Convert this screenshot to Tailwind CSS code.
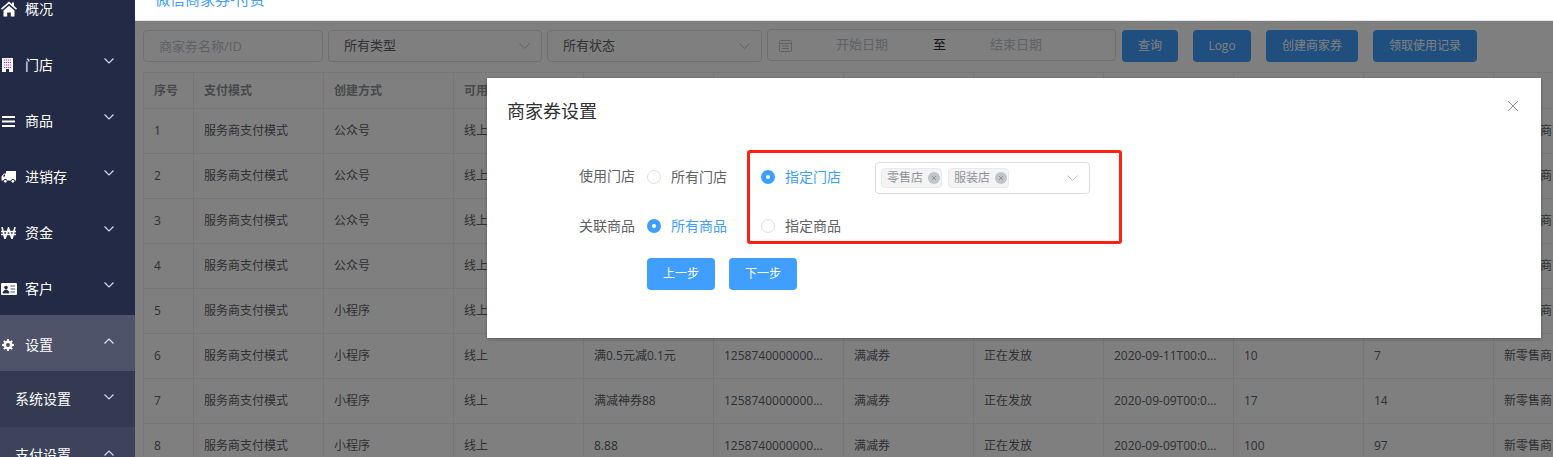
<!DOCTYPE html>
<html lang="zh-CN">
<head>
  <meta charset="UTF-8">
  <title>商家券设置</title>
  <script src="https://cdn.jsdelivr.net/npm/@tailwindcss/browser@4"></script>
</head>
<body class="h-[457px] overflow-hidden bg-white font-['Open_Sans','Noto_Sans_CJK_SC',sans-serif]">
  <div class="flex h-[457px]">
    <!-- 侧边栏 -->
    <aside class="w-[135px] shrink-0 overflow-hidden bg-[#222a45] text-sm text-white">
      <div class="-mt-[21px] flex h-14 items-center pt-1 pr-[21px] pl-[1px]">
        <svg class="mr-[8px] h-[16px] w-[16px]" viewBox="0 0 16 15" fill="#fff"><path d="M8 0 0 7l1 1.200L8 2.200l7 6L16 7l-3-2.600V1h-2v1.700zM2.500 9 8 4.200 13.500 9v6H9.800v-4H6.200v4H2.500z"/></svg>
        <span>概况</span>
      </div>
      <div class="flex h-14 items-center pt-1 pr-[21px] pl-[2px]">
        <svg class="mr-[12px] h-[14px] w-[11px]" viewBox="0 0 11 14"><rect width="11" height="14" fill="#fff"/><path d="M2 2h7M2 4.500h7M2 7h7M2 9.500h7" stroke="#b02fc8" stroke-width="1.200" stroke-dasharray="1.200 .7"/><rect x="4" y="11" width="3" height="3" fill="#222a45"/></svg>
        <span>门店</span>
        <svg class="mb-2 ml-auto h-[6px] w-[10px]" viewBox="0 0 10 6" fill="none" stroke="#d5d8e0" stroke-width="1.200"><path d="m.5.500 4.500 4.500L9.500.5"/></svg>
      </div>
      <div class="flex h-14 items-center pt-1 pr-[21px] pl-[2px]">
        <svg class="mr-[10px] h-[11px] w-[13px]" viewBox="0 0 13 11" fill="#fff"><path d="M0 0h13v2H0zM0 4.500h13v2H0zM0 9h13v2H0z"/></svg>
        <span>商品</span>
        <svg class="mb-2 ml-auto h-[6px] w-[10px]" viewBox="0 0 10 6" fill="none" stroke="#d5d8e0" stroke-width="1.200"><path d="m.5.500 4.500 4.500L9.500.5"/></svg>
      </div>
      <div class="flex h-14 items-center pt-1 pr-[21px] pl-[1px]">
        <svg class="mr-[9px] h-[12px] w-[15px]" viewBox="0 0 15 12" fill="#fff"><path d="M5 0h10v9.500h-1.200a2 2 0 0 0-3.800 0H6.200a2 2 0 0 0-3.800 0H.5V5.500L3 2.500h2zM1.800 5.500H4V3.600H3.300z"/><circle cx="4.300" cy="10.300" r="1.400"/><circle cx="11.900" cy="10.300" r="1.400"/></svg>
        <span>进销存</span>
        <svg class="mb-2 ml-auto h-[6px] w-[10px]" viewBox="0 0 10 6" fill="none" stroke="#d5d8e0" stroke-width="1.200"><path d="m.5.500 4.500 4.500L9.500.5"/></svg>
      </div>
      <div class="flex h-14 items-center pt-1 pr-[21px] pl-[1px]">
        <svg class="mr-[9px] h-[12px] w-[15px]" viewBox="0 0 15 12" fill="none" stroke="#fff" stroke-width="1.600"><path d="m1 0 3 12 3.500-11L11 12l3-12M0 4.500h15M0 7.500h15"/></svg>
        <span>资金</span>
        <svg class="mb-2 ml-auto h-[6px] w-[10px]" viewBox="0 0 10 6" fill="none" stroke="#d5d8e0" stroke-width="1.200"><path d="m.5.500 4.500 4.500L9.500.5"/></svg>
      </div>
      <div class="flex h-14 items-center pt-1 pr-[21px] pl-[1px]">
        <svg class="mr-[8px] h-[12px] w-[16px]" viewBox="0 0 16 12"><rect width="16" height="12" rx="1" fill="#fff"/><circle cx="5" cy="4.500" r="1.800" fill="#222a45"/><path d="M2 10c0-4 6-4 6 0zM9.500 3H14M9.500 6H14M9.500 9H14" fill="#222a45" stroke="#222a45" stroke-width=".8"/></svg>
        <span>客户</span>
        <svg class="mb-2 ml-auto h-[6px] w-[10px]" viewBox="0 0 10 6" fill="none" stroke="#d5d8e0" stroke-width="1.200"><path d="m.5.500 4.500 4.500L9.500.5"/></svg>
      </div>
      <div class="flex h-14 items-center bg-[#4e5369] pt-1 pr-[21px] pl-[2px]">
        <svg class="mr-[11px] h-[12px] w-[12px]" viewBox="0 0 12 12" fill="none" stroke="#fff"><circle cx="6" cy="6" r="3.300" stroke-width="2.600"/><path d="M6 0v2M6 10v2M0 6h2M10 6h2M1.800 1.800l1.400 1.400M8.800 8.800l1.400 1.400M1.800 10.200l1.400-1.400M8.800 3.200l1.400-1.400" stroke-width="1.800"/></svg>
        <span>设置</span>
        <svg class="mb-2 ml-auto h-[6px] w-[10px]" viewBox="0 0 10 6" fill="none" stroke="#e4e6ec" stroke-width="1.200"><path d="m.5 5.500L5 1l4.500 4.500"/></svg>
      </div>
      <div class="flex h-14 items-center bg-[#333a52] pr-[21px] pl-[15px]">
        <span>系统设置</span>
        <svg class="mb-1 ml-auto h-[6px] w-[10px]" viewBox="0 0 10 6" fill="none" stroke="#d5d8e0" stroke-width="1.200"><path d="m.5.500 4.500 4.500L9.500.5"/></svg>
      </div>
      <div class="flex h-14 items-center bg-[#3c435b] pr-[21px] pl-[15px]">
        <span>支付设置</span>
        <svg class="mb-1 ml-auto h-[6px] w-[10px]" viewBox="0 0 10 6" fill="none" stroke="#d5d8e0" stroke-width="1.200"><path d="m.5 5.500L5 1l4.500 4.500"/></svg>
      </div>
    </aside>

    <main class="flex min-w-0 flex-1 flex-col">
      <!-- 顶部标题 -->
      <div class="h-[21px] shrink-0 overflow-hidden border-b border-[#e4e7ed] pl-5">
        <div class="-mt-[9px] text-[15px] leading-4 text-[#409eff]">微信商家券-付费</div>
      </div>

      <div class="relative min-h-0 flex-1 overflow-hidden pt-[9px] pl-2">
        <!-- 筛选栏 -->
        <div class="mb-[10px] flex h-8 text-[13px] text-[#606266]">
          <input class="h-8 w-[180px] rounded border border-[#dcdfe6] px-[15px] placeholder:text-[#c0c4cc]" placeholder="商家券名称/ID">
          <div class="ml-[5px] flex h-8 w-[214px] items-center justify-between rounded border border-[#dcdfe6] pr-[11px] pl-[15px]">
            <span>所有类型</span>
            <svg class="h-[6px] w-[11px]" viewBox="0 0 11 6" fill="none" stroke="#c0c4cc"><path d="m.5.500 5 5 5-5"/></svg>
          </div>
          <div class="ml-[5px] flex h-8 w-[215px] items-center justify-between rounded border border-[#dcdfe6] pr-[11px] pl-[15px]">
            <span>所有状态</span>
            <svg class="h-[6px] w-[11px]" viewBox="0 0 11 6" fill="none" stroke="#c0c4cc"><path d="m.5.500 5 5 5-5"/></svg>
          </div>
          <div class="ml-[5px] -mt-px flex h-8 w-[349px] items-center rounded border border-[#dcdfe6] pl-[11px] text-[#c0c4cc]">
            <svg class="mr-[44px] h-[13px] w-[13px]" viewBox="0 0 13 13" fill="none" stroke="#c0c4cc"><rect x=".5" y="1.500" width="12" height="11" rx="1"/><path d="M.5 4.500h12M3 .5v2M10 .5v2M3 7h7M3 9.500h7"/></svg>
            <span class="w-[97px]">开始日期</span>
            <span class="w-[57px] text-[#303133]">至</span>
            <span>结束日期</span>
          </div>
          <button class="ml-[6px] h-8 w-[56px] rounded bg-[#409eff] text-xs text-white">查询</button>
          <button class="ml-[15px] h-8 w-[58px] rounded bg-[#409eff] text-xs text-white">Logo</button>
          <button class="ml-[15px] h-8 w-[92px] rounded bg-[#409eff] text-xs text-white">创建商家券</button>
          <button class="ml-[15px] h-8 w-[104px] rounded bg-[#409eff] text-xs text-white">领取使用记录</button>
        </div>

        <!-- 列表 -->
        <table class="w-[1480px] table-fixed border-collapse text-left text-xs text-[#606266] [&_td]:h-[45px] [&_td]:truncate [&_td]:border [&_td]:border-[#ebeef5] [&_td]:px-[10px] [&_th]:h-9 [&_th]:truncate [&_th]:border [&_th]:border-[#ebeef5] [&_th]:px-[10px] [&_th]:font-semibold [&_th]:text-[#909399]">
          <thead>
            <tr>
              <th class="w-[50px]">序号</th><th class="w-[130px]">支付模式</th><th class="w-[130px]">创建方式</th><th class="w-[130px]">可用范围</th><th class="w-[130px]"></th><th class="w-[130px]"></th><th class="w-[130px]"></th><th class="w-[130px]"></th><th class="w-[130px]"></th><th class="w-[130px]"></th><th class="w-[130px]"></th><th class="w-[130px]"></th>
            </tr>
          </thead>
          <tbody>
            <tr><td>1</td><td>服务商支付模式</td><td>公众号</td><td>线上</td><td></td><td></td><td></td><td></td><td></td><td></td><td></td><td>新零售商家</td></tr>
            <tr><td>2</td><td>服务商支付模式</td><td>公众号</td><td>线上</td><td></td><td></td><td></td><td></td><td></td><td></td><td></td><td>新零售商家</td></tr>
            <tr><td>3</td><td>服务商支付模式</td><td>公众号</td><td>线上</td><td></td><td></td><td></td><td></td><td></td><td></td><td></td><td>新零售商家</td></tr>
            <tr><td>4</td><td>服务商支付模式</td><td>公众号</td><td>线上</td><td></td><td></td><td></td><td></td><td></td><td></td><td></td><td>新零售商家</td></tr>
            <tr><td>5</td><td>服务商支付模式</td><td>小程序</td><td>线上</td><td></td><td></td><td></td><td></td><td></td><td></td><td></td><td>新零售商家</td></tr>
            <tr><td>6</td><td>服务商支付模式</td><td>小程序</td><td>线上</td><td>满0.5元减0.1元</td><td>1258740000000...</td><td>满减券</td><td>正在发放</td><td>2020-09-11T00:0...</td><td>10</td><td>7</td><td>新零售商家</td></tr>
            <tr><td>7</td><td>服务商支付模式</td><td>小程序</td><td>线上</td><td>满减神券88</td><td>1258740000000...</td><td>满减券</td><td>正在发放</td><td>2020-09-09T00:0...</td><td>17</td><td>14</td><td>新零售商家</td></tr>
            <tr><td>8</td><td>服务商支付模式</td><td>小程序</td><td>线上</td><td>8.88</td><td>1258740000000...</td><td>满减券</td><td>正在发放</td><td>2020-09-09T00:0...</td><td>100</td><td>97</td><td>新零售商家</td></tr>
          </tbody>
        </table>

        <!-- 遮罩 -->
        <div class="absolute inset-0 bg-black/50"></div>
      </div>
    </main>
  </div>

  <!-- 弹窗 -->
  <div class="absolute top-[78px] left-[487px] h-[260px] w-[1054px] bg-white pt-[21px] pl-5 shadow-[0_1px_3px_rgba(0,0,0,0.3)]">
    <div class="text-lg leading-6 text-[#303133]">商家券设置</div>
    <svg class="absolute top-[22px] right-[22px] h-[12px] w-[12px]" viewBox="0 0 12 12" fill="none" stroke="#909399"><path d="m1 1 10 10M11 1 1 11"/></svg>

    <div class="mt-[38px] flex flex-col gap-[17px] text-sm text-[#606266]">
      <div class="flex h-8 items-center">
        <div class="mb-[2px] w-[128px] text-right">使用门店</div>
        <div class="ml-3 flex w-[114px] items-center gap-[10px]">
          <span class="h-[14px] w-[14px] rounded-full border border-[#dcdfe6]"></span>
          <span>所有门店</span>
        </div>
        <div class="flex w-[114px] items-center gap-[10px] text-[#409eff]">
          <span class="flex h-[14px] w-[14px] items-center justify-center rounded-full bg-[#409eff]"><span class="h-1 w-1 rounded-full bg-white"></span></span>
          <span>指定门店</span>
        </div>
        <div class="mt-[2px] flex h-8 w-[215px] items-center gap-[6px] rounded border border-[#dcdfe6] pr-[11px] pl-[5px] text-xs text-[#909399]">
          <span class="flex h-5 items-center gap-[5px] rounded border border-[#e9e9eb] bg-[#f4f4f5] pr-px pl-[5px]">零售店
            <svg class="h-3 w-3" viewBox="0 0 12 12"><circle cx="6" cy="6" r="6" fill="#c0c4cc"/><path d="m4 4 4 4M8 4 4 8" stroke="#909399"/></svg>
          </span>
          <span class="flex h-5 items-center gap-[5px] rounded border border-[#e9e9eb] bg-[#f4f4f5] pr-px pl-[5px]">服装店
            <svg class="h-3 w-3" viewBox="0 0 12 12"><circle cx="6" cy="6" r="6" fill="#c0c4cc"/><path d="m4 4 4 4M8 4 4 8" stroke="#909399"/></svg>
          </span>
          <svg class="ml-auto h-[6px] w-[11px]" viewBox="0 0 11 6" fill="none" stroke="#c0c4cc"><path d="m.5.500 5 5 5-5"/></svg>
        </div>
      </div>
      <div class="flex h-8 items-center">
        <div class="w-[128px] text-right">关联商品</div>
        <div class="ml-3 flex w-[114px] items-center gap-[10px] text-[#409eff]">
          <span class="flex h-[14px] w-[14px] items-center justify-center rounded-full bg-[#409eff]"><span class="h-1 w-1 rounded-full bg-white"></span></span>
          <span>所有商品</span>
        </div>
        <div class="flex items-center gap-[10px]">
          <span class="h-[14px] w-[14px] rounded-full border border-[#dcdfe6]"></span>
          <span>指定商品</span>
        </div>
      </div>
      <div class="-mt-px ml-[140px] flex gap-[14px]">
        <button class="h-8 w-[68px] rounded bg-[#409eff] text-xs text-white">上一步</button>
        <button class="h-8 w-[68px] rounded bg-[#409eff] text-xs text-white">下一步</button>
      </div>
    </div>

    <!-- 红框标注 -->
    <div class="absolute top-[72px] left-[260px] h-[94px] w-[375px] rounded-[3px] border-[3px] border-[#ff2013]"></div>
  </div>
</body>
</html>
